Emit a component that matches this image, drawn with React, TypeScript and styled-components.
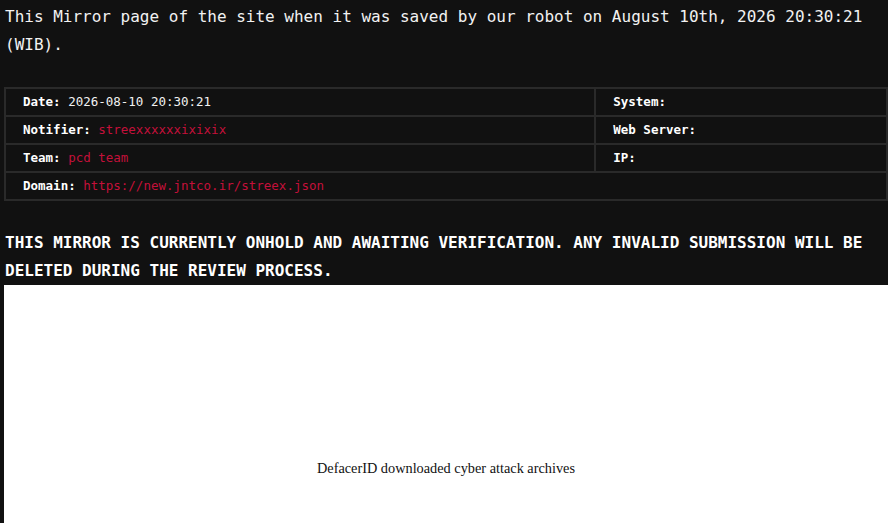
import React from "react";
import styled, { createGlobalStyle } from "styled-components";

const Global = createGlobalStyle`
  html, body {
    margin: 0;
    padding: 0;
    background: #111111;
    overflow: hidden;
  }
  body {
    color: #ffffff;
    font-family: "DejaVu Sans Mono", "Liberation Mono", monospace;
  }
`;

const Page = styled.div`
  padding: 3px 0 0 4px;
  display: flex;
  flex-direction: column;
`;

const Intro = styled.p`
  margin: 0;
  padding-left: 1px;
  font-size: 16px;
  line-height: 28px;
  color: #f2f2f2;
`;

const InfoGrid = styled.div`
  margin-top: 28px;
  display: grid;
  grid-template-columns: 67fr 33fr;
  gap: 2px;
  padding: 2px;
  background: #2a2a2a;
`;

const Cell = styled.div<{ $span?: boolean }>`
  grid-column: ${(p) => (p.$span ? "1 / span 2" : "auto")};
  background: #111111;
  height: 26px;
  display: flex;
  align-items: center;
  padding: 0 0 1px 17px;
  box-sizing: border-box;
  font-size: 12.5px;
  white-space: nowrap;
`;

const Label = styled.span`
  font-weight: bold;
  color: #ffffff;
  margin-right: 7.5px;
`;

const Value = styled.span<{ $red?: boolean }>`
  color: ${(p) => (p.$red ? "#c4103a" : "#f2f2f2")};
`;

const Notice = styled.h2`
  margin: 27px 0 0 0;
  padding: 1px 0 0 1px;
  font-size: 16px;
  line-height: 28px;
  font-weight: bold;
  text-transform: uppercase;
  color: #ffffff;
`;

const Frame = styled.div`
  height: 238px;
  background: #ffffff;
  color: #111111;
  font-family: "Liberation Serif", "Times New Roman", serif;
  font-size: 14.3px;
  display: flex;
  justify-content: center;
  padding-top: 175px;
  box-sizing: border-box;
`;

export default function App() {
  return (
    <>
      <Global />
      <Page>
        <Intro>
          This Mirror page of the site when it was saved by our robot on August 10th, 2026 20:30:21 (WIB).
        </Intro>
        <InfoGrid>
          <Cell>
            <Label>Date:</Label>
            <Value>2026-08-10 20:30:21</Value>
          </Cell>
          <Cell>
            <Label>System:</Label>
          </Cell>
          <Cell>
            <Label>Notifier:</Label>
            <Value $red>streexxxxxxixixix</Value>
          </Cell>
          <Cell>
            <Label>Web Server:</Label>
          </Cell>
          <Cell>
            <Label>Team:</Label>
            <Value $red>pcd team</Value>
          </Cell>
          <Cell>
            <Label>IP:</Label>
          </Cell>
          <Cell $span>
            <Label>Domain:</Label>
            <Value $red>https://new.jntco.ir/streex.json</Value>
          </Cell>
        </InfoGrid>
        <Notice>
          This mirror is currently onhold and awaiting verification. Any invalid submission will be deleted during the review process.
        </Notice>
        <Frame>DefacerID downloaded cyber attack archives</Frame>
      </Page>
    </>
  );
}
